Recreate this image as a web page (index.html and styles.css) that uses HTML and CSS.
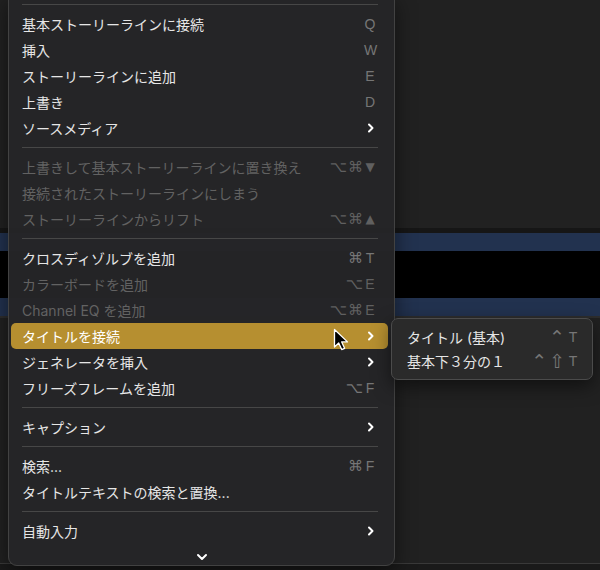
FILE: index.html
```html
<!DOCTYPE html>
<html lang="ja">

<head>
  <meta charset="utf-8">
  <meta name="viewport" content="width=device-width">
  <title>タイムライン メニュー</title>
  <link rel="stylesheet" href="styles.css">
</head>

<body>
  <!-- timeline behind the menu -->
  <div class="timeline">
    <div class="tl-top"></div>
    <div class="tl-edge"></div>
    <div class="tl-clip"></div>
    <div class="tl-gap"></div>
    <div class="tl-clip"></div>
    <div class="tl-rest"></div>
    <div class="tl-floor"></div>
  </div>

  <div class="menu">
    <div class="sep"></div>
    <div class="item"><span class="label">基本ストーリーラインに接続</span><span class="keys"><span class="key">Q</span></span></div>
    <div class="item"><span class="label">挿入</span><span class="keys"><span class="key">W</span></span></div>
    <div class="item"><span class="label">ストーリーラインに追加</span><span class="keys"><span class="key">E</span></span></div>
    <div class="item"><span class="label">上書き</span><span class="keys"><span class="key">D</span></span></div>
    <div class="item"><span class="label">ソースメディア</span><span class="keys"><svg class="chev" width="12" height="12" viewBox="0 0 12 12"><path d="M5 2.5l3.5 3.5-3.5 3.5" /></svg></span></div>
    <div class="sep"></div>
    <div class="item disabled"><span class="label">上書きして基本ストーリーラインに置き換え</span><span class="keys"><span class="mods">⌥⌘</span><span class="key tri">▼</span></span></div>
    <div class="item disabled"><span class="label">接続されたストーリーラインにしまう</span></div>
    <div class="item disabled"><span class="label">ストーリーラインからリフト</span><span class="keys"><span class="mods">⌥⌘</span><span class="key tri">▲</span></span></div>
    <div class="sep"></div>
    <div class="item"><span class="label">クロスディゾルブを追加</span><span class="keys"><span class="mods">⌘</span><span class="key">T</span></span></div>
    <div class="item disabled"><span class="label">カラーボードを追加</span><span class="keys"><span class="mods">⌥</span><span class="key">E</span></span></div>
    <div class="item disabled"><span class="label">Channel EQ を追加</span><span class="keys"><span class="mods">⌥⌘</span><span class="key">E</span></span></div>
    <div class="item active"><span class="label">タイトルを接続</span><span class="keys"><svg class="chev" width="12" height="12" viewBox="0 0 12 12"><path d="M5 2.5l3.5 3.5-3.5 3.5" /></svg></span></div>
    <div class="item"><span class="label">ジェネレータを挿入</span><span class="keys"><svg class="chev" width="12" height="12" viewBox="0 0 12 12"><path d="M5 2.5l3.5 3.5-3.5 3.5" /></svg></span></div>
    <div class="item"><span class="label">フリーズフレームを追加</span><span class="keys"><span class="mods">⌥</span><span class="key">F</span></span></div>
    <div class="sep"></div>
    <div class="item"><span class="label">キャプション</span><span class="keys"><svg class="chev" width="12" height="12" viewBox="0 0 12 12"><path d="M5 2.5l3.5 3.5-3.5 3.5" /></svg></span></div>
    <div class="sep"></div>
    <div class="item"><span class="label">検索...</span><span class="keys"><span class="mods">⌘</span><span class="key">F</span></span></div>
    <div class="item"><span class="label">タイトルテキストの検索と置換...</span></div>
    <div class="sep"></div>
    <div class="item"><span class="label">自動入力</span><span class="keys"><svg class="chev" width="12" height="12" viewBox="0 0 12 12"><path d="M5 2.5l3.5 3.5-3.5 3.5" /></svg></span></div>
    <div class="scroll-down">
      <svg width="12" height="8" viewBox="0 0 12 8"><path d="M2 2l4 4 4-4" /></svg>
    </div>
  </div>

  <div class="submenu">
    <div class="item"><span class="label">タイトル (基本)</span><span class="keys"><span class="mods">⌃</span><span class="key">T</span></span></div>
    <div class="item"><span class="label">基本下３分の１</span><span class="keys"><span class="mods">⌃⇧</span><span class="key">T</span></span></div>
  </div>

  <!-- mouse pointer over the highlighted row -->
  <svg class="pointer" width="16" height="24" viewBox="0 0 16 24">
    <path d="M1.5 1.5v17.5l4.2-4 3 6.6 2.9-1.3-2.9-6.4h5.8z" />
  </svg>
</body>

</html>
```

FILE: styles.css
```css
/* Reset */
html,
body {
  margin: 0;
  padding: 0;
}

body {
  position: relative;
  width: 600px;
  height: 570px;
  overflow: hidden;
  background-color: #1d1d1d;
  font-family: Inter, "Noto Sans CJK JP", sans-serif;
}

/* Timeline bands behind the menu */
.timeline {
  display: flex;
  flex-direction: column;
  height: 570px;
}

.tl-top {
  height: 228px;
  background-color: #212121;
}

.tl-edge {
  height: 5px;
  background-color: #161616;
}

.tl-clip {
  height: 18px;
  background-color: #22324f;
}

.tl-gap {
  height: 47px;
  background-color: #000000;
}

.tl-rest {
  height: 245px;
  background-color: #212121;
  border-top: 2px solid #2e2e2e;
}

.tl-floor {
  flex: 1;
  background-color: #1a1a1a;
  border-top: 1px solid #393939;
}

/* Context menu */
.menu {
  position: absolute;
  left: 8px;
  top: -3px;
  width: 385px;
  background-color: rgba(37, 37, 39, 0.97);
  border: 1px solid #424242;
  border-radius: 0 0 9px 9px;
  box-shadow: 0 6px 20px rgba(0, 0, 0, 0.5);
}

.item {
  display: flex;
  align-items: center;
  height: 26px;
  margin: 0 6px 0 2px;
  padding: 0 12px 0 11px;
  border-radius: 5px;
  color: #e6e6e6;
  font-size: 14px;
  white-space: nowrap;
}

.item .label {
  flex: 1;
}

.item.disabled {
  color: #626262;
}

.item.active {
  background-color: #b68f30;
  color: #ffffff;
}

.keys {
  display: flex;
  align-items: center;
  color: #767676;
  font-family: "Liberation Sans", "DejaVu Sans", sans-serif;
  font-size: 14px;
}

.disabled .keys {
  color: #606060;
}

.mods {
  letter-spacing: 1px;
  font-family: "DejaVu Sans", sans-serif;
  font-size: 15px;
}

.key {
  width: 12px;
  text-align: center;
}

.key.tri {
  font-family: "DejaVu Sans", sans-serif;
  font-size: 12px;
}

.chev {
  display: block;
}

.chev path,
.scroll-down path {
  fill: none;
  stroke: #ffffff;
  stroke-width: 2;
  stroke-linecap: round;
  stroke-linejoin: round;
}

.sep {
  display: flex;
  align-items: center;
  height: 13px;
  padding: 0 16px 0 13px;
}

.sep::before {
  content: "";
  flex: 1;
  height: 1px;
  background-color: #474747;
}

.scroll-down {
  display: flex;
  justify-content: center;
  align-items: center;
  height: 21px;
}

.scroll-down svg {
  display: block;
  margin-top: 5px;
}

/* Submenu */
.submenu {
  position: absolute;
  left: 391px;
  top: 318px;
  width: 190px;
  padding: 6px 5px;
  background-color: #2a2a2a;
  border: 1px solid #4b4b4b;
  border-radius: 7px;
  box-shadow: 0 6px 18px rgba(0, 0, 0, 0.5);
}

.submenu .item {
  height: 24px;
  margin: 0;
  padding: 0 8px 0 10px;
}

.submenu .mods {
  font-size: 19px;
  letter-spacing: 2px;
  line-height: 20px;
}

/* Mouse pointer */
.pointer {
  position: absolute;
  left: 333px;
  top: 328px;
}

.pointer path {
  fill: #000000;
  stroke: #ffffff;
  stroke-width: 1.3;
  stroke-linejoin: round;
}
```
